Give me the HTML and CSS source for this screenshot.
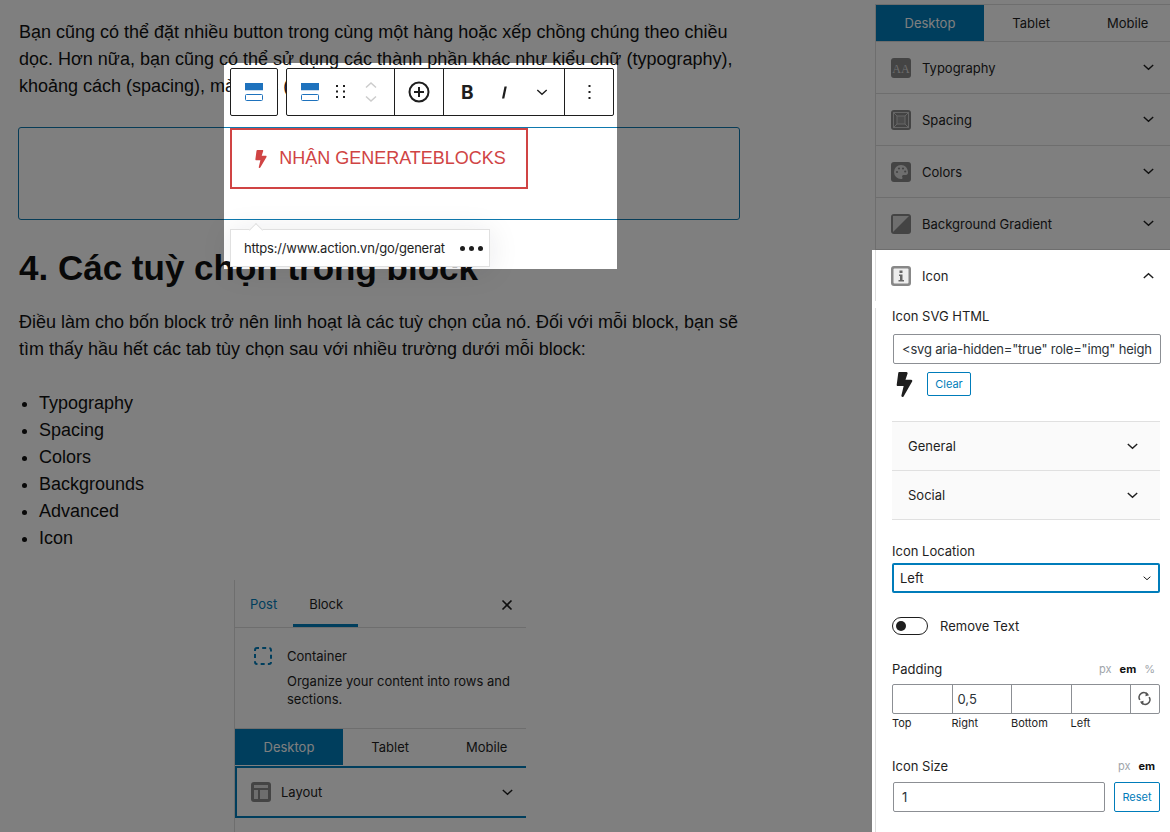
FILE: index.html
```html
<!DOCTYPE html>
<html lang="vi">
<head>
<meta charset="utf-8">
<title>GenerateBlocks</title>
<link rel="stylesheet" href="styles.css">
</head>
<body>
<svg class="defs" width="0" height="0">
  <symbol id="bolt" viewBox="0 0 320 512"><path fill="currentColor" d="M296 160H180.6l42.6-129.8C227.2 15 215.7 0 200 0H56C44 0 33.8 8.9 32.2 20.8l-32 240C-2.7 275.2 8.5 288 24 288h118.7L96.6 482.5c-3.6 15.2 8 29.5 23.3 29.5 8.4 0 16.4-4.4 20.8-12l176-304c9.3-15.9-2.2-36-20.7-36z"/></symbol>
  <symbol id="chev" viewBox="0 0 11 7"><path fill="none" stroke="currentColor" stroke-width="1.4" d="M.8 1 5.5 5.2 10.2 1"/></symbol>
  <symbol id="block" viewBox="0 0 18 18"><path fill="#1e72bd" d="M0 0h18v7H0z"/><path fill="#c9dcee" d="M0 7h18v1H0z"/><rect x=".5" y="11.5" width="17" height="6" rx="1" fill="#fff" stroke="#1e72bd"/></symbol>
</svg>

<main class="article">
  <p class="para">Bạn cũng có thể đặt nhiều button trong cùng một hàng hoặc xếp chồng chúng theo chiều dọc. Hơn nữa, bạn cũng có thể sử dụng các thành phần khác như kiểu chữ (typography), khoảng cách (spacing), màu sắc (color).</p>
  <div class="container-block">
    <a class="red-btn"><svg class="red-bolt"><use href="#bolt"/></svg>NHẬN GENERATEBLOCKS</a>
  </div>
  <h2 class="heading">4. Các tuỳ chọn trong block</h2>
  <p class="para para-opts">Điều làm cho bốn block trở nên linh hoạt là các tuỳ chọn của nó. Đối với mỗi block, bạn sẽ tìm thấy hầu hết các tab tùy chọn sau với nhiều trường dưới mỗi block:</p>
  <ul class="opts">
    <li>Typography</li>
    <li>Spacing</li>
    <li>Colors</li>
    <li>Backgrounds</li>
    <li>Advanced</li>
    <li>Icon</li>
  </ul>
  <div class="shot">
    <div class="shot-tabs">
      <span class="shot-post">Post</span>
      <span class="shot-block">Block</span>
      <svg class="shot-x" viewBox="0 0 12 12"><path stroke="currentColor" stroke-width="1.6" d="M1.5 1.5l9 9M10.5 1.5l-9 9"/></svg>
    </div>
    <div class="shot-info">
      <svg class="shot-dash" viewBox="0 0 18 18"><rect x="1" y="1" width="16" height="16" rx="2" fill="none" stroke="#007cba" stroke-width="2" stroke-dasharray="4 3.2" stroke-dashoffset="2"/></svg>
      <div>
        <div class="shot-title">Container</div>
        <div class="shot-desc">Organize your content into rows and sections.</div>
      </div>
    </div>
    <div class="device-tabs">
      <span class="device active">Desktop</span><span class="device">Tablet</span><span class="device">Mobile</span>
    </div>
    <div class="shot-panel">
      <svg class="picon" viewBox="0 0 20 20"><rect width="20" height="20" rx="3" fill="#888"/><path fill="#ddd" d="M3 3h14v3H3zM3 8h4v9H3zM9 8h8v9H9z"/></svg>
      <span>Layout</span>
      <svg class="chev"><use href="#chev"/></svg>
    </div>
  </div>
</main>

<aside class="side">
  <div class="device-tabs side-tabs">
    <span class="device active">Desktop</span><span class="device">Tablet</span><span class="device">Mobile</span>
  </div>
  <div class="panel">
    <svg class="picon" viewBox="0 0 20 20"><rect width="20" height="20" rx="3" fill="#888"/><text x="10" y="15" text-anchor="middle" font-family="Liberation Serif" font-size="12" fill="#ddd">AA</text></svg>
    <span>Typography</span><svg class="chev"><use href="#chev"/></svg>
  </div>
  <div class="panel">
    <svg class="picon" viewBox="0 0 20 20"><rect width="20" height="20" rx="3" fill="#888"/><rect x="2.5" y="2.5" width="15" height="15" fill="none" stroke="#ccc"/><rect x="6" y="6" width="8" height="8" fill="#999" stroke="#ccc"/><path stroke="#ccc" d="M3 3l3 3M17 3l-3 3M3 17l3-3M17 17l-3-3"/></svg>
    <span>Spacing</span><svg class="chev"><use href="#chev"/></svg>
  </div>
  <div class="panel">
    <svg class="picon" viewBox="0 0 20 20"><rect width="20" height="20" rx="3" fill="#888"/><path fill="#ddd" d="M10 3a7 7 0 0 0 0 14c1.6 0 1.8-1 1.3-1.8-.6-1 0-2.2 1.2-2.2H15c1.300 0 2-1 2-2.500C17 6 14 3 10 3z"/><circle cx="6" cy="10" r="1.1" fill="#888"/><circle cx="8" cy="6.5" r="1.1" fill="#888"/><circle cx="12" cy="6.5" r="1.1" fill="#888"/><circle cx="14.2" cy="9.5" r="1.1" fill="#888"/></svg>
    <span>Colors</span><svg class="chev"><use href="#chev"/></svg>
  </div>
  <div class="panel">
    <svg class="picon" viewBox="0 0 20 20"><rect width="20" height="20" rx="3" fill="#888"/><path fill="#ddd" d="M2 2h16L2 18z"/></svg>
    <span>Background Gradient</span><svg class="chev"><use href="#chev"/></svg>
  </div>
  <div class="panel panel-open">
    <svg class="picon" viewBox="0 0 20 20"><rect width="20" height="20" rx="3" fill="#888"/><rect x="2.5" y="2.5" width="15" height="15" rx="1" fill="#eee"/><path fill="#666" d="M8.5 4.5h3V7h-3zM8 8.500h3.500V14H13v1.500H7.500V14H9v-4H8z"/></svg>
    <span>Icon</span><svg class="chev chev-up"><use href="#chev"/></svg>
  </div>
  <div class="body">
    <div class="lbl lbl-svg">Icon SVG HTML</div>
    <div class="field field-svg">&lt;svg aria-hidden="true" role="img" heigh</div>
    <div class="preview">
      <svg class="big-bolt"><use href="#bolt"/></svg>
      <span class="btn-line btn-clear">Clear</span>
    </div>
    <div class="sub sub-first"><span>General</span><svg class="chev"><use href="#chev"/></svg></div>
    <div class="sub"><span>Social</span><svg class="chev"><use href="#chev"/></svg></div>
    <div class="lbl lbl-loc">Icon Location</div>
    <div class="select"><span>Left</span><svg class="chev chev-small"><use href="#chev"/></svg></div>
    <div class="toggle-row">
      <span class="toggle"><i></i></span>
      <span>Remove Text</span>
    </div>
    <div class="lbl-row lbl-pad">
      <span>Padding</span>
      <span class="units"><span>px</span><b>em</b><span>%</span></span>
    </div>
    <div class="pad-grid">
      <span class="pad-cell"></span><span class="pad-cell">0,5</span><span class="pad-cell"></span><span class="pad-cell"></span>
      <span class="pad-cell pad-sync"><svg viewBox="0 0 14 16"><path fill="none" stroke="#555" stroke-width="1.8" d="M2 9.5A5 5 0 0 1 10.5 4M12 6.5A5 5 0 0 1 3.5 12"/><path fill="#555" d="M8.5 1L12 4.5l-4 1zM5.500 15L2 11.500l4-1z"/></svg></span>
    </div>
    <div class="pad-names"><span>Top</span><span>Right</span><span>Bottom</span><span>Left</span></div>
    <div class="lbl-row lbl-size">
      <span>Icon Size</span>
      <span class="units"><span>px</span><b>em</b></span>
    </div>
    <div class="size-row">
      <div class="field field-size">1</div>
      <span class="btn-line btn-reset">Reset</span>
    </div>
  </div>
</aside>

<div class="dim"></div>

<div class="pop">
  <div class="toolbar">
    <div class="tgroup tgroup-one"><svg class="t-block"><use href="#block"/></svg></div>
    <div class="tgroup tgroup-two">
      <div class="tcell tcell-move">
        <svg class="t-block"><use href="#block"/></svg>
        <svg class="t-drag" viewBox="0 0 10 14"><path fill="#1e1e1e" d="M0 0h2v2H0zM7 0h2v2H7zM0 5.500h2v2H0zM7 5.500h2v2H7zM0 11h2v2H0zM7 11h2v2H7z"/></svg>
        <svg class="t-arrows" viewBox="0 0 12 22"><path fill="none" stroke="#ccc" stroke-width="1.5" d="M1 6.5 6 2l5 4.5M1 15.500 6 20l5-4.500"/></svg>
      </div>
      <div class="tcell tcell-add">
        <svg class="t-plus" viewBox="0 0 22 22"><circle cx="11" cy="11" r="9.500" fill="none" stroke="#1e1e1e" stroke-width="2"/><path stroke="#1e1e1e" stroke-width="2" d="M11 6v10M6 11h10"/></svg>
      </div>
      <div class="tcell tcell-format">
        <span class="t-b">B</span>
        <svg class="t-i" viewBox="0 0 5 12"><path fill="#1e1e1e" d="M2.5 0h2.300L2.300 12H0z"/></svg>
        <svg class="t-chev"><use href="#chev"/></svg>
      </div>
      <div class="tcell tcell-more">
        <svg class="t-dots" viewBox="0 0 3 14"><path fill="#1e1e1e" d="M.5 0h2v2h-2zM.5 6h2v2h-2zM.5 12h2v2h-2z"/></svg>
      </div>
    </div>
  </div>
  <div class="link-tip">
    <span class="link-url">https://www.action.vn/go/generat</span>
    <span class="link-dots"><i></i><i></i><i></i></span>
  </div>
</div>
</body>
</html>
```
FILE: styles.css
```css
html,body{
  margin: 0;
  height: 832px;
  overflow: hidden;
  background: #fff;
}
body{
  display: flex;
  position: relative;
  width: 1170px;
  font-family: "Inter", "Liberation Sans", sans-serif;
  font-size: 13px;
  color: #1e1e1e;
}
.defs{
  position: absolute;
}

/* article */
.article{
  width: 872px;
  flex: none;
  padding: 19px 0 0 19px;
  box-sizing: border-box;
  font-family: "Liberation Sans", sans-serif;
  color: #111;
}
.para{
  width: 722px;
  margin: 0;
  font-size: 18px;
  line-height: 27px;
}
.container-block{
  width: 720px;
  height: 91px;
  margin: 27px 0 0 -1px;
  border: 1px solid #0f79ae;
  border-radius: 3px;
  display: flex;
  justify-content: center;
  align-items: flex-start;
}
.red-btn{
  width: 298px;
  height: 61px;
  box-sizing: border-box;
  border: 2px solid #d04444;
  padding-left: 3px;
  display: flex;
  align-items: center;
  justify-content: center;
  font-size: 18px;
  color: #d04444;
}
.red-bolt{
  width: 12px;
  height: 18px;
  margin-right: 12px;
}
.heading{
  margin: 28px 0 0;
  font-size: 35px;
  line-height: 40px;
  color: #111;
}
.para-opts{
  margin-top: 21px;
}
.opts{
  margin: 27px 0 0;
  padding: 0 0 0 20px;
  font-size: 18px;
  line-height: 27px;
}

/* screenshot inside the article */
.shot{
  width: 291px;
  height: 260px;
  margin: 28px 0 0 215px;
  border-left: 1px solid #ddd;
  font-family: "Inter", "Liberation Sans", sans-serif;
  font-size: 13px;
  color: #1e1e1e;
  overflow: hidden;
  background: #fff;
}
.shot-tabs{
  height: 47px;
  border-bottom: 1px solid #ddd;
  position: relative;
  display: flex;
  align-items: center;
  padding-left: 15px;
}
.shot-post{
  color: #007cba;
}
.shot-block{
  align-self: stretch;
  line-height: 49px;
  padding: 0 15px 0 16px;
  margin-left: 16px;
  border-bottom: 3px solid #007cba;
}
.shot-x{
  position: absolute;
  right: 13px;
  top: 19px;
  width: 12px;
  height: 12px;
}
.shot-info{
  display: flex;
  gap: 15px;
  padding: 19px 10px 19px 19px;
  border-bottom: 1px solid #ddd;
  line-height: 18px;
  height: 62px;
}
.shot-dash{
  width: 18px;
  height: 18px;
  flex: none;
}
.shot-title{
  margin-bottom: 7px;
}
.shot-desc{
  width: 230px;
}
.shot-panel{
  height: 48px;
  margin-top: 1px;
  border: 2px solid #007cba;
  border-right: 0;
  display: flex;
  align-items: center;
  padding: 0 13px 0 14px;
  gap: 10px;
}
.shot-panel .chev{
  margin-left: auto;
}

/* sidebar */
.side{
  width: 298px;
  flex: none;
  box-sizing: border-box;
  padding: 4px 0 0 3px;
  overflow: hidden;
  background: #fff;
}
.side-tabs{
  border-top: 1px solid #ddd;
  border-left: 1px solid #ddd;
  border-bottom: 1px solid #ddd;
}
.device-tabs{
  display: flex;
  height: 36px;
  width: 330px;
}
.device{
  padding: 0 28.5px;
  line-height: 36px;
}
.device.active{
  background: #007cba;
  color: #fff;
}
.panel{
  height: 51px;
  border-bottom: 1px solid #ddd;
  border-left: 1px solid #ddd;
  display: flex;
  align-items: center;
  padding: 0 16px 0 15px;
  gap: 11px;
}
.panel-open{
  border-bottom: 0;
}
.panel .chev{
  margin-left: auto;
}
.picon{
  width: 20px;
  height: 20px;
  flex: none;
}
.chev{
  width: 11px;
  height: 7px;
  flex: none;
}
.chev-up{
  transform: rotate(180deg);
}
.chev-small{
  width: 8px;
  height: 5px;
}
.body{
  border-left: 1px solid #ddd;
  padding: 0 10px 0 16px;
  height: 560px;
}
.lbl{
  line-height: 16px;
}
.lbl-svg{
  margin-top: 7px;
}
.field{
  border: 1px solid #8c8f94;
  border-radius: 2px;
  box-sizing: border-box;
  height: 30px;
  line-height: 28px;
  padding-left: 8px;
  white-space: nowrap;
  color: #2c3338;
}
.field-svg{
  margin: 10px 0 0 1px;
  width: 268px;
  overflow: hidden;
  letter-spacing: -.2px;
}
.preview{
  display: flex;
  align-items: flex-start;
  margin-top: 8px;
}
.big-bolt{
  width: 17px;
  height: 25px;
  margin: 0 14px 0 4px;
  color: #1e1e1e;
}
.btn-line{
  border: 1px solid #007cba;
  border-radius: 2px;
  color: #007cba;
  box-sizing: border-box;
  text-align: center;
  font-size: 11px;
}
.btn-clear{
  width: 44px;
  height: 24px;
  line-height: 22px;
}
.sub{
  width: 268px;
  height: 49px;
  background: #fafafa;
  border-bottom: 1px solid #e0e0e0;
  display: flex;
  align-items: center;
  justify-content: space-between;
  padding: 0 22px 0 16px;
  box-sizing: border-box;
}
.sub-first{
  margin-top: 24px;
  border-top: 1px solid #e0e0e0;
  height: 50px;
}
.lbl-loc{
  margin-top: 23px;
}
.select{
  width: 268px;
  height: 30px;
  margin-top: 4px;
  box-sizing: border-box;
  border: 2px solid #007cba;
  border-radius: 2px;
  display: flex;
  align-items: center;
  justify-content: space-between;
  padding: 0 7px 0 6px;
  color: #1e1e1e;
}
.toggle-row{
  display: flex;
  align-items: center;
  gap: 12px;
  margin-top: 24px;
  height: 18px;
}
.toggle{
  width: 36px;
  height: 18px;
  box-sizing: border-box;
  border: 1px solid #1e1e1e;
  border-radius: 9px;
  padding: 3px;
}
.toggle i{
  display: block;
  width: 10px;
  height: 10px;
  border-radius: 50%;
  background: #1e1e1e;
}
.lbl-row{
  display: flex;
  justify-content: space-between;
  align-items: center;
  width: 268px;
  line-height: 16px;
}
.lbl-pad{
  margin-top: 26px;
}
.lbl-size{
  margin-top: 28px;
}
.units{
  display: flex;
  gap: 8px;
  padding-right: 5px;
  font-size: 11px;
  color: #a0a5aa;
}
.units b{
  color: #111;
}
.pad-grid{
  width: 268px;
  height: 30px;
  margin-top: 7px;
  box-sizing: border-box;
  border: 1px solid #8c8f94;
  border-radius: 2px;
  display: grid;
  grid-template-columns: 59.5px 59.5px 59.5px 59.5px 1fr;
}
.pad-cell{
  border-right: 1px solid #8c8f94;
  line-height: 28px;
  padding-left: 5px;
  color: #2c3338;
}
.pad-sync{
  border-right: 0;
  padding: 6px 0 0 7px;
}
.pad-sync svg{
  width: 13px;
  height: 15px;
  display: block;
}
.pad-names{
  width: 268px;
  display: grid;
  grid-template-columns: 59.5px 59.5px 59.5px 59.5px 1fr;
  font-size: 11px;
  line-height: 14px;
  margin-top: 2px;
}
.size-row{
  display: flex;
  justify-content: space-between;
  width: 267px;
  margin: 8px 0 0 1px;
}
.field-size{
  width: 212px;
}
.btn-reset{
  width: 46px;
  height: 30px;
  line-height: 28px;
}

/* dim layer, with holes for what the picture points at */
.dim{
  position: absolute;
  left: 0;
  top: 0;
  width: 1170px;
  height: 832px;
  background: rgba(0,0,0,.5);
  clip-path: path(evenodd, "M0 0H1170V832H0Z M224 63H617V269H224Z M872 250H1170V832H872Z");
}

/* block toolbar and link popover */
.pop{
  position: absolute;
  left: 230px;
  top: 68px;
}
.toolbar{
  display: flex;
  gap: 8px;
}
.tgroup{
  height: 48px;
  box-sizing: border-box;
  border: 1px solid #1e1e1e;
  border-radius: 2px;
  background: #fff;
  display: flex;
  align-items: center;
}
.tgroup-one{
  width: 48px;
  justify-content: center;
}
.tgroup-two{
  width: 328px;
}
.t-block{
  width: 18px;
  height: 18px;
}
.tcell{
  height: 100%;
  display: flex;
  align-items: center;
  border-right: 1px solid #1e1e1e;
  box-sizing: border-box;
}
.tcell-move{
  width: 108px;
  padding-left: 14px;
}
.t-drag{
  width: 10px;
  height: 14px;
  margin-left: 17px;
}
.t-arrows{
  width: 12px;
  height: 22px;
  margin-left: 19px;
}
.tcell-add{
  width: 49px;
  justify-content: center;
}
.t-plus{
  width: 22px;
  height: 22px;
}
.tcell-format{
  width: 121px;
  padding-left: 17px;
}
.t-b{
  font-family: "Inter", sans-serif;
  font-weight: 700;
  font-size: 19px;
}
.t-i{
  width: 5px;
  height: 15px;
  margin-left: 28px;
}
.t-chev{
  width: 12px;
  height: 7px;
  margin-left: 29px;
}
.tcell-more{
  border-right: 0;
  flex: 1;
  justify-content: center;
}
.t-dots{
  width: 3px;
  height: 14px;
}
.link-tip{
  position: absolute;
  top: 161px;
  left: 0;
  width: 260px;
  height: 38px;
  box-sizing: border-box;
  background: #fff;
  border: 1px solid #e0e0e0;
  box-shadow: 0 3px 30px rgba(25,30,35,.1);
  display: flex;
  align-items: center;
  padding-left: 13px;
  white-space: nowrap;
}
.link-tip::before{
  content: "";
  position: absolute;
  left: 20px;
  top: -5px;
  width: 9px;
  height: 9px;
  background: #fff;
  border: 1px solid #e0e0e0;
  border-right: 0;
  border-bottom: 0;
  transform: rotate(45deg);
}
.link-url{
  width: 205px;
  letter-spacing: -.2px;
}
.link-dots{
  display: flex;
  gap: 4px;
  margin-left: 11px;
}
.link-dots i{
  width: 5px;
  height: 5px;
  border-radius: 50%;
  background: #1e1e1e;
}
```
